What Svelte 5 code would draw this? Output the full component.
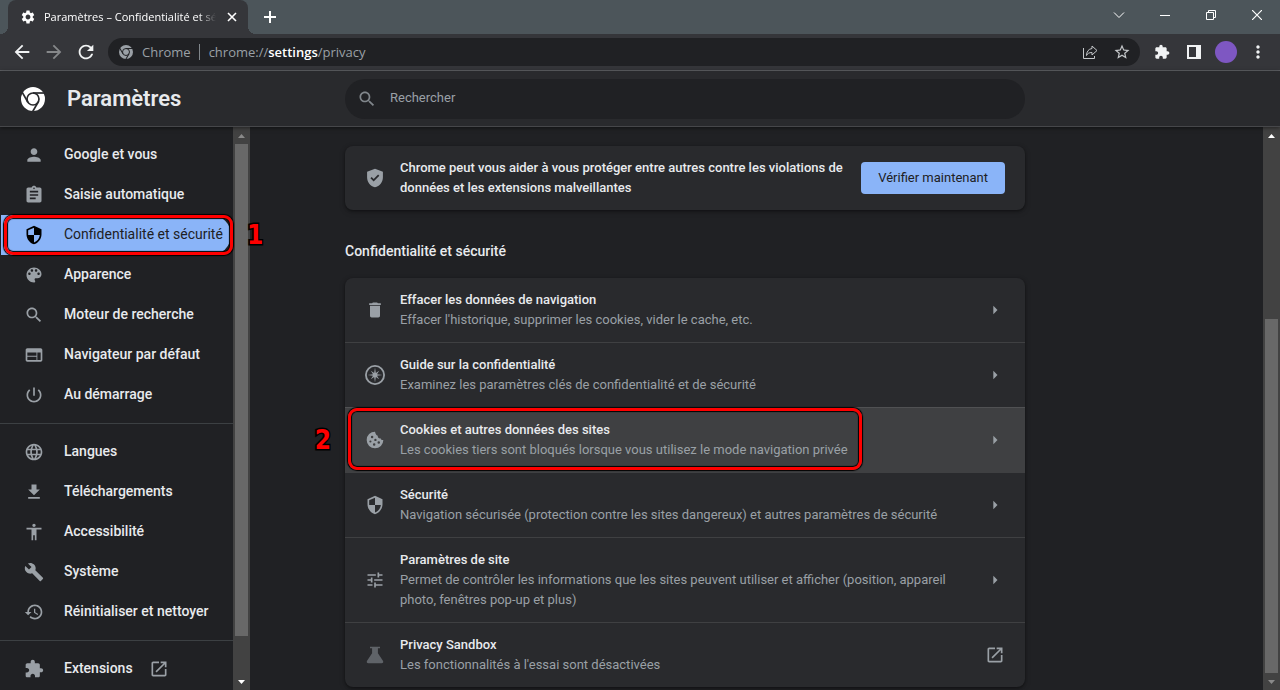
<script>
    const paths = {
        person: "M12 12c2.21 0 4-1.79 4-4s-1.79-4-4-4-4 1.79-4 4 1.79 4 4 4zm0 2c-2.67 0-8 1.34-8 4v2h16v-2c0-2.66-5.33-4-8-4z",
        assignment: "M19 3h-4.18C14.4 1.84 13.3 1 12 1c-1.3 0-2.4.84-2.82 2H5c-1.1 0-2 .9-2 2v14c0 1.1.9 2 2 2h14c1.1 0 2-.9 2-2V5c0-1.1-.9-2-2-2zm-7 0c.55 0 1 .45 1 1s-.45 1-1 1-1-.45-1-1 .45-1 1-1zm2 14H7v-2h7v2zm3-4H7v-2h10v2zm0-4H7V7h10v2z",
        security: "M12 1L3 5v6c0 5.55 3.84 10.74 9 12 5.16-1.26 9-6.45 9-12V5l-9-4zm0 10.99h7c-.53 4.12-3.28 7.79-7 8.94V12H5V6.3l7-3.11v8.8z",
        palette: "M12 3c-4.97 0-9 4.03-9 9s4.03 9 9 9c.83 0 1.5-.67 1.5-1.5 0-.39-.15-.74-.39-1.01-.23-.26-.38-.61-.38-.99 0-.83.67-1.5 1.5-1.5H16c2.76 0 5-2.24 5-5 0-4.42-4.03-8-9-8zm-5.5 9c-.83 0-1.5-.67-1.5-1.5S5.67 9 6.5 9 8 9.67 8 10.5 7.33 12 6.5 12zm3-4C8.67 8 8 7.33 8 6.5S8.67 5 9.5 5s1.5.67 1.5 1.5S10.33 8 9.5 8zm5 0c-.83 0-1.5-.67-1.5-1.5S13.67 5 14.5 5s1.5.67 1.5 1.5S15.33 8 14.5 8zm3 4c-.83 0-1.5-.67-1.5-1.5S16.67 9 17.5 9s1.5.67 1.5 1.5-.67 1.5-1.5 1.5z",
        search: "M15.5 14h-.79l-.28-.27C15.41 12.59 16 11.11 16 9.5 16 5.91 13.09 3 9.5 3S3 5.91 3 9.5 5.91 16 9.5 16c1.61 0 3.09-.59 4.23-1.57l.27.28v.79l5 4.99L20.49 19l-4.99-5zm-6 0C7.01 14 5 11.99 5 9.5S7.01 5 9.5 5 14 7.01 14 9.5 11.99 14 9.5 14z",
        web: "M20 4H4c-1.1 0-1.99.9-1.99 2L2 18c0 1.1.9 2 2 2h16c1.1 0 2-.9 2-2V6c0-1.1-.9-2-2-2zm-5 14H4v-4h11v4zm0-5H4V9h11v4zm5 5h-4V9h4v9z",
        power: "M13 3h-2v10h2V3zm4.83 2.17l-1.42 1.42C17.99 7.86 19 9.81 19 12c0 3.87-3.13 7-7 7s-7-3.13-7-7c0-2.19 1.01-4.14 2.58-5.42L6.17 5.17C4.23 6.82 3 9.26 3 12c0 4.97 4.03 9 9 9s9-4.03 9-9c0-2.74-1.23-5.18-3.17-6.83z",
        language: "M11.99 2C6.47 2 2 6.48 2 12s4.47 10 9.99 10C17.52 22 22 17.52 22 12S17.52 2 11.99 2zm6.93 6h-2.95c-.32-1.25-.78-2.45-1.38-3.56 1.84.63 3.37 1.91 4.33 3.56zM12 4.04c.83 1.2 1.48 2.53 1.91 3.96h-3.82c.43-1.43 1.08-2.76 1.91-3.96zM4.26 14C4.1 13.36 4 12.69 4 12s.1-1.36.26-2h3.38c-.08.66-.14 1.32-.14 2 0 .68.06 1.34.14 2H4.26zm.82 2h2.95c.32 1.25.78 2.45 1.38 3.56-1.84-.63-3.37-1.9-4.33-3.56zm2.95-8H5.08c.96-1.66 2.49-2.93 4.33-3.56C8.81 5.55 8.35 6.75 8.03 8zM12 19.96c-.83-1.2-1.48-2.53-1.91-3.96h3.82c-.43 1.43-1.08 2.76-1.91 3.96zM14.34 14H9.66c-.09-.66-.16-1.32-.16-2 0-.68.07-1.35.16-2h4.68c.09.65.16 1.32.16 2 0 .68-.07 1.34-.16 2zm.25 5.56c.6-1.11 1.06-2.31 1.38-3.56h2.95c-.96 1.65-2.49 2.93-4.33 3.56zM16.36 14c.08-.66.14-1.32.14-2 0-.68-.06-1.34-.14-2h3.38c.16.64.26 1.31.26 2s-.1 1.36-.26 2h-3.38z",
        download: "M19 9h-4V3H9v6H5l7 7 7-7zM5 18v2h14v-2H5z",
        accessibility: "M12 2c1.1 0 2 .9 2 2s-.9 2-2 2-2-.9-2-2 .9-2 2-2zm9 7h-6v13h-2v-6h-2v6H9V9H3V7h18v2z",
        build: "M22.7 19l-9.1-9.1c.9-2.3.4-5-1.5-6.9-2-2-5-2.4-7.4-1.3L9 6 6 9 1.6 4.7C.4 7.1.9 10.1 2.9 12.1c1.9 1.9 4.6 2.4 6.9 1.5l9.1 9.1c.4.4 1 .4 1.4 0l2.3-2.3c.5-.4.5-1.1.1-1.4z",
        restore: "M13 3c-4.97 0-9 4.03-9 9H1l3.89 3.89.07.14L9 12H6c0-3.87 3.13-7 7-7s7 3.13 7 7-3.13 7-7 7c-1.93 0-3.68-.79-4.94-2.06l-1.42 1.42C8.27 19.99 10.51 21 13 21c4.97 0 9-4.03 9-9s-4.03-9-9-9zm-1 5v5l4.28 2.54.72-1.21-3.5-2.08V8H12z",
        extension: "M20.5 11H19V7c0-1.1-.9-2-2-2h-4V3.5C13 2.12 11.88 1 10.5 1S8 2.12 8 3.5V5H4c-1.1 0-1.99.9-1.99 2v3.8H3.5c1.49 0 2.7 1.21 2.7 2.7s-1.21 2.7-2.7 2.7H2V20c0 1.1.9 2 2 2h3.8v-1.5c0-1.49 1.21-2.7 2.7-2.7 1.49 0 2.7 1.21 2.7 2.7V22H17c1.1 0 2-.9 2-2v-4h1.5c1.38 0 2.5-1.12 2.5-2.5S21.88 11 20.5 11z",
        external: "M19 19H5V5h7V3H5c-1.11 0-2 .9-2 2v14c0 1.1.89 2 2 2h14c1.1 0 2-.9 2-2v-7h-2v7zM14 3v2h3.59l-9.83 9.83 1.41 1.41L19 6.41V10h2V3h-7z",
        trash: "M6 19c0 1.1.9 2 2 2h8c1.1 0 2-.9 2-2V7H6v12zM19 4h-3.5l-1-1h-5l-1 1H5v2h14V4z",
        compass: "M12 0a12 12 0 1 0 0 24 12 12 0 0 0 0-24zm0 2.2a9.8 9.8 0 1 1 0 19.6 9.8 9.8 0 0 1 0-19.6zM12 3l1 6.6 4-2.6-2.6 4L21 12l-6.6 1 2.6 4-4-2.6L12 21l-1-6.6-4 2.6 2.6-4L3 12l6.6-1L7 7l4 2.6z",
        cookie: "M12 2A10 10 0 1 0 22 12c-1.6.5-3.1-.4-3.3-2-2 .4-3.7-1.2-3.4-3.2C13.6 6.4 12.6 4.7 12 2zM8.5 7a1.5 1.5 0 1 1 0 3 1.5 1.5 0 0 1 0-3zM6.5 12.5a1.3 1.3 0 1 1 0 2.6 1.3 1.3 0 0 1 0-2.6zM12.5 10.5a1.4 1.4 0 1 1 0 2.8 1.4 1.4 0 0 1 0-2.8zM11 16a1.5 1.5 0 1 1 0 3 1.5 1.5 0 0 1 0-3zM16.5 13.5a1.5 1.5 0 1 1 0 3 1.5 1.5 0 0 1 0-3z",
        tune: "M3 17v2h6v-2H3zM3 5v2h10V5H3zm10 16v-2h8v-2h-8v-2h-2v6h2zM7 9v2H3v2h4v2h2V9H7zm14 4v-2H11v2h10zm-6-4h2V7h4V5h-4V3h-2v6z",
        flask: "M6 2h12v2h-2.5v6l6 9c1 1.5.2 3-1.5 3H4c-1.7 0-2.5-1.5-1.5-3l6-9V4H6z",
        shieldCheck: "M12 1L2.5 4.5v6.5c0 5.8 3.9 10.7 9.5 12 5.6-1.3 9.5-6.2 9.5-12V4.5L12 1zm-1.6 15.2l-3.9-3.9 1.5-1.5 2.4 2.4 5.3-5.3 1.5 1.5-6.8 6.8z",
        gear: "M19.14 12.94c.04-.3.06-.61.06-.94 0-.32-.02-.64-.07-.94l2.03-1.58c.18-.14.23-.41.12-.61l-1.92-3.32c-.12-.22-.37-.29-.59-.22l-2.39.96c-.5-.38-1.03-.7-1.62-.94l-.36-2.54c-.04-.24-.24-.41-.48-.41h-3.84c-.24 0-.43.17-.47.41l-.36 2.54c-.59.24-1.13.57-1.62.94l-2.39-.96c-.22-.08-.47 0-.59.22L2.74 8.87c-.12.21-.08.47.12.61l2.03 1.58c-.05.3-.09.63-.09.94s.02.64.07.94l-2.03 1.58c-.18.14-.23.41-.12.61l1.92 3.32c.12.22.37.29.59.22l2.39-.96c.5.38 1.03.7 1.62.94l.36 2.54c.05.24.24.41.48.41h3.84c.24 0 .44-.17.47-.41l.36-2.54c.59-.24 1.13-.56 1.62-.94l2.39.96c.22.08.47 0 .59-.22l1.92-3.32c.12-.22.07-.47-.12-.61l-2.01-1.58zM12 15.6c-1.98 0-3.6-1.62-3.6-3.6s1.62-3.6 3.6-3.6 3.6 1.62 3.6 3.6-1.62 3.6-3.6 3.6z",
        back: "M20 11H7.83l5.59-5.59L12 4l-8 8 8 8 1.41-1.41L7.83 13H20v-2z",
        forward: "M12 4l-1.41 1.41L16.17 11H4v2h12.17l-5.58 5.59L12 20l8-8z",
        reload: "M17.65 6.35C16.2 4.9 14.21 4 12 4c-4.42 0-7.99 3.58-7.99 8s3.57 8 7.99 8c3.73 0 6.84-2.55 7.73-6h-2.08c-.82 2.33-3.04 4-5.65 4-3.31 0-6-2.69-6-6s2.69-6 6-6c1.66 0 3.14.69 4.22 1.78L13 11h7V4l-2.35 2.35z",
        star: "M22 9.24l-7.19-.62L12 2 9.19 8.63 2 9.24l5.46 4.73L5.82 21 12 17.27 18.18 21l-1.63-7.03L22 9.24zM12 15.4l-3.76 2.27 1-4.28-3.32-2.88 4.38-.38L12 6.1l1.71 4.04 4.38.38-3.32 2.88 1 4.28L12 15.4z",
        more: "M12 8c1.1 0 2-.9 2-2s-.9-2-2-2-2 .9-2 2 .9 2 2 2zm0 2c-1.1 0-2 .9-2 2s.9 2 2 2 2-.9 2-2-.9-2-2-2zm0 6c-1.1 0-2 .9-2 2s.9 2 2 2 2-.9 2-2-.9-2-2-2z",
        arrow: "M10 7l5 5-5 5z",
    };

    const menu = [
        [
            { icon: "person", label: "Google et vous", href: "#people" },
            { icon: "assignment", label: "Saisie automatique", href: "#autofill" },
            { icon: "security", label: "Confidentialité et sécurité", href: "#privacy", step: 1 },
            { icon: "palette", label: "Apparence", href: "#appearance" },
            { icon: "search", label: "Moteur de recherche", href: "#search" },
            { icon: "web", label: "Navigateur par défaut", href: "#defaultBrowser" },
            { icon: "power", label: "Au démarrage", href: "#onStartup" },
        ],
        [
            { icon: "language", label: "Langues", href: "#languages" },
            { icon: "download", label: "Téléchargements", href: "#downloads" },
            { icon: "accessibility", label: "Accessibilité", href: "#accessibility" },
            { icon: "build", label: "Système", href: "#system" },
            { icon: "restore", label: "Réinitialiser et nettoyer", href: "#reset" },
        ],
        [{ icon: "extension", label: "Extensions", href: "#extensions", external: true }],
    ];

    const rows = [
        { icon: "trash", title: "Effacer les données de navigation", text: "Effacer l'historique, supprimer les cookies, vider le cache, etc." },
        { icon: "compass", title: "Guide sur la confidentialité", text: "Examinez les paramètres clés de confidentialité et de sécurité" },
        { icon: "cookie", title: "Cookies et autres données des sites", text: "Les cookies tiers sont bloqués lorsque vous utilisez le mode navigation privée", step: 2 },
        { icon: "security", title: "Sécurité", text: "Navigation sécurisée (protection contre les sites dangereux) et autres paramètres de sécurité" },
        { icon: "tune", title: "Paramètres de site", text: "Permet de contrôler les informations que les sites peuvent utiliser et afficher (position, appareil photo, fenêtres pop-up et plus)" },
        { icon: "flask", title: "Privacy Sandbox", text: "Les fonctionnalités à l'essai sont désactivées", external: true, dim: true },
    ];

    let current = "#privacy";
    let query = "";
</script>

{#snippet icon(name, size = 20)}
    <svg class="icon" width={size} height={size} viewBox="0 0 24 24" aria-hidden="true">
        <path d={paths[name]} fill="currentColor" fill-rule="evenodd" />
    </svg>
{/snippet}

{#snippet chromeLogo(size, gap)}
    <svg class="icon" width={size} height={size} viewBox="0 0 24 24" aria-hidden="true">
        <circle cx="12" cy="12" r="12" fill="currentColor" />
        <g stroke={gap} stroke-width="1.7" fill="none">
            <circle cx="12" cy="12" r="6" />
            <path d="M12 6h12" />
            <path d="M12 6h12" transform="rotate(120 12 12)" />
            <path d="M12 6h12" transform="rotate(240 12 12)" />
        </g>
    </svg>
{/snippet}

{#snippet scrollbar(size, atEnd)}
    <div class="scrollbar" aria-hidden="true">
        <span class="cap" class:off={!atEnd}><svg width="7" height="4" viewBox="0 0 7 4"><path d="M0 4L3.5 0 7 4z" fill="currentColor" /></svg></span>
        <div class="track" class:end={atEnd}><div class="thumb" style="height: {size}%"></div></div>
        <span class="cap" class:off={atEnd}><svg width="7" height="4" viewBox="0 0 7 4"><path d="M0 0L3.5 4 7 0z" fill="currentColor" /></svg></span>
    </div>
{/snippet}

<div class="window">
    <div class="titlebar">
        <div class="tab">
            {@render icon("gear", 16)}
            <span class="tab-title">Paramètres – Confidentialité et sécurité</span>
            <button class="plain" aria-label="Fermer l'onglet">
                <svg width="16" height="16" viewBox="0 0 16 16"><path d="M4 4l8 8M12 4l-8 8" stroke="currentColor" stroke-width="1.6" /></svg>
            </button>
        </div>
        <button class="plain new-tab" aria-label="Nouvel onglet">
            <svg width="14" height="14" viewBox="0 0 14 14"><path d="M7 1v12M1 7h12" stroke="currentColor" stroke-width="2" /></svg>
        </button>
        <div class="controls">
            <button class="plain" aria-label="Rechercher dans les onglets"><svg width="12" height="12" viewBox="0 0 12 12"><path d="M1 3.5l5 5 5-5" stroke="currentColor" fill="none" /></svg></button>
            <button class="plain" aria-label="Réduire"><svg width="10" height="10" viewBox="0 0 10 10"><path d="M0 5.5h10" stroke="currentColor" /></svg></button>
            <button class="plain" aria-label="Restaurer"><svg width="10" height="10" viewBox="0 0 10 10"><path d="M.5 2.5h7v7h-7zM2.5 2.5v-2h7v7h-2" stroke="currentColor" fill="none" /></svg></button>
            <button class="plain" aria-label="Fermer"><svg width="10" height="10" viewBox="0 0 10 10"><path d="M0 0l10 10M10 0L0 10" stroke="currentColor" stroke-width="1.2" /></svg></button>
        </div>
    </div>

    <div class="toolbar">
        <button class="plain tool" aria-label="Retour">{@render icon("back", 22)}</button>
        <button class="plain tool disabled" aria-label="Avancer">{@render icon("forward", 22)}</button>
        <button class="plain tool" aria-label="Actualiser">{@render icon("reload", 22)}</button>
        <div class="omnibox">
            {@render chromeLogo(14, "#202124")}
            <span class="origin">Chrome</span>
            <span class="url">chrome://<b>settings</b>/privacy</span>
            <button class="plain tool" aria-label="Partager">
                <svg width="16" height="16" viewBox="0 0 16 16" fill="none" stroke="currentColor"><path d="M1.5 4v10.5h11V12" /><path d="M10 2l5 4.5-5 4.5V8.5c-3 0-4.500 1-5.500 3 .2-4 2-6.500 5.500-7z" stroke-linejoin="round" /></svg>
            </button>
            <button class="plain tool" aria-label="Ajouter aux favoris">{@render icon("star", 18)}</button>
        </div>
        <div class="actions">
            <button class="plain tool" aria-label="Extensions">{@render icon("extension", 16)}</button>
            <button class="plain tool" aria-label="Panneau latéral">
                <svg width="14" height="14" viewBox="0 0 14 14"><path d="M0 0h14v14H0zM2 2v10h7V2z" fill="currentColor" fill-rule="evenodd" /></svg>
            </button>
            <button class="plain tool" aria-label="Profil"><span class="avatar"></span></button>
            <button class="plain tool" aria-label="Menu">{@render icon("more", 20)}</button>
        </div>
    </div>

    <header>
        <div class="brand">
            {@render chromeLogo(24, "#292a2d")}
            <h1>Paramètres</h1>
        </div>
        <label class="search">
            {@render icon("search")}
            <input type="text" placeholder="Rechercher" aria-label="Rechercher" bind:value={query} />
        </label>
    </header>

    <div class="content">
        <aside>
            <nav>
                {#each menu as group}
                    <div class="group">
                        {#each group as item}
                            <a href={item.href} class:selected={item.href === current} on:click={() => current = item.href}>
                                {@render icon(item.icon)}
                                <span class="label">{item.label}</span>
                                {#if item.external}{@render icon("external")}{/if}
                                {#if item.step}
                                    <span class="mark"></span>
                                    <span class="step after">{item.step}</span>
                                {/if}
                            </a>
                        {/each}
                    </div>
                {/each}
            </nav>
            {@render scrollbar(93, false)}
        </aside>

        <main>
            <section class="card check">
                {@render icon("shieldCheck")}
                <p>Chrome peut vous aider à vous protéger entre autres contre les violations de données et les extensions malveillantes</p>
                <button class="primary">Vérifier maintenant</button>
            </section>

            <h2>Confidentialité et sécurité</h2>
            <section class="card">
                {#each rows as row}
                    <button class="row" class:hover={row.step}>
                        <span class="lead" class:dim={row.dim}>{@render icon(row.icon)}</span>
                        <span class="text">
                            <span class="title">{row.title}</span>
                            <span class="sub">{row.text}</span>
                        </span>
                        {@render icon(row.external ? "external" : "arrow")}
                        {#if row.step}
                            <span class="mark"></span>
                            <span class="step before">{row.step}</span>
                        {/if}
                    </button>
                {/each}
            </section>
        </main>
        {@render scrollbar(67, true)}
    </div>
</div>

<style>
    :global(body) {
        margin: 0;
        background: #202124;
    }

    .window {
        display: flex;
        flex-direction: column;
        height: 100vh;
        overflow: hidden;
        background: #202124;
        color: #e8eaed;
        font-family: Roboto, "Liberation Sans", sans-serif;
        font-size: 13px;
        line-height: 20px;
    }

    .icon {
        flex: none;
        display: block;
    }

    .plain {
        display: flex;
        align-items: center;
        justify-content: center;
        padding: 0;
        border: 0;
        background: none;
        color: inherit;
    }

    .titlebar {
        display: flex;
        height: 34px;
        padding-left: 8px;
        background: #4c555a;
        color: #fff;
        font-family: "Open Sans", "Noto Sans", sans-serif;
    }
    .tab {
        position: relative;
        display: flex;
        align-items: center;
        gap: 8px;
        box-sizing: border-box;
        width: 240px;
        padding: 0 8px 0 12px;
        border-radius: 8px 8px 0 0;
        background: #35363a;
    }
    .tab::before,
    .tab::after {
        content: "";
        position: absolute;
        bottom: 0;
        width: 8px;
        height: 8px;
    }
    .tab::before {
        right: 100%;
        background: radial-gradient(circle at 0 0, transparent 8px, #35363a 8px);
    }
    .tab::after {
        left: 100%;
        background: radial-gradient(circle at 100% 0, transparent 8px, #35363a 8px);
    }
    .tab-title {
        flex: 1;
        overflow: hidden;
        white-space: nowrap;
        font-size: 11px;
        font-weight: 500;
        mask-image: linear-gradient(to right, #000 90%, transparent);
    }
    .new-tab {
        width: 44px;
    }
    .controls {
        display: flex;
        height: 29px;
        margin-left: auto;
    }
    .controls button {
        width: 46px;
    }

    .toolbar {
        display: flex;
        align-items: center;
        height: 36px;
        padding: 0 6px;
        border-bottom: 1px solid #5f6165;
        background: #35363a;
        font-family: "Open Sans", "Noto Sans", sans-serif;
    }
    .tool {
        flex: none;
        width: 32px;
        height: 28px;
        color: #f1f3f4;
    }
    .disabled {
        color: #86888a;
    }
    .omnibox {
        flex: 1;
        display: flex;
        align-items: center;
        height: 28px;
        margin-left: 6px;
        padding: 0 2px 0 11px;
        border-radius: 14px;
        background: #202124;
        color: #9aa0a6;
        font-size: 13px;
    }
    .omnibox .tool {
        color: #c4c7ca;
    }
    .origin {
        margin-left: 9px;
        padding-right: 8px;
        border-right: 1px solid #80868b;
        line-height: 16px;
    }
    .url {
        flex: 1;
        padding-left: 9px;
    }
    .url b {
        color: #fff;
        font-weight: 600;
    }
    .actions {
        display: flex;
        margin-left: 6px;
    }
    .avatar {
        width: 22px;
        height: 22px;
        border-radius: 50%;
        background: #7e57c2;
    }

    header {
        position: relative;
        z-index: 1;
        display: flex;
        align-items: center;
        height: 55px;
        border-bottom: 1px solid #46474a;
        background: #292a2d;
        box-shadow: 0 1px 4px rgba(0, 0, 0, 0.5);
    }
    .brand {
        flex: none;
        display: flex;
        align-items: center;
        gap: 22px;
        box-sizing: border-box;
        width: 345px;
        padding-left: 21px;
        color: #fff;
    }
    h1 {
        margin: 0;
        color: #e8eaed;
        font-size: 22px;
        font-weight: 600;
        line-height: 24px;
    }
    .search {
        flex: 0 1 680px;
        display: flex;
        align-items: center;
        gap: 13px;
        box-sizing: border-box;
        height: 40px;
        padding: 0 12px;
        border-radius: 20px;
        background: #202124;
        color: #80868b;
    }
    .search input {
        flex: 1;
        padding: 0 0 2px;
        border: 0;
        outline: none;
        background: none;
        color: #e8eaed;
        font: inherit;
    }
    .search input::placeholder {
        color: #9aa0a6;
        opacity: 1;
    }

    .content {
        flex: 1;
        display: flex;
        min-height: 0;
    }
    aside {
        flex: none;
        display: flex;
        width: 250px;
    }
    nav {
        flex: 1;
        min-width: 0;
        padding-top: 8px;
    }
    .group + .group {
        margin-top: 8px;
        padding-top: 8px;
        border-top: 1px solid #3c4043;
    }
    nav a {
        position: relative;
        display: flex;
        align-items: center;
        gap: 20px;
        height: 40px;
        margin: 0 2px 0 1px;
        padding-left: 23px;
        border-radius: 0 20px 20px 0;
        color: #e8eaed;
        font-size: 14px;
        font-weight: 500;
        text-decoration: none;
        white-space: nowrap;
    }
    nav a .icon {
        color: #9aa0a6;
    }
    nav a .icon:not(:first-child) {
        margin-left: -4px;
    }
    nav a.selected {
        background: #8ab4f8;
        color: #202124;
        font-weight: 400;
    }
    nav a.selected .icon {
        color: #000;
    }
    .label {
        padding-bottom: 2px;
    }

    .scrollbar {
        flex: none;
        display: flex;
        flex-direction: column;
        width: 17px;
        background: #424242;
    }
    .cap {
        display: flex;
        align-items: center;
        justify-content: center;
        height: 17px;
        color: #fff;
    }
    .cap.off {
        color: #8a8a8a;
    }
    .track {
        flex: 1;
        display: flex;
        flex-direction: column;
        padding: 0 2px;
    }
    .track.end {
        justify-content: flex-end;
    }
    .thumb {
        background: #686868;
    }

    main {
        flex: 1;
        min-width: 0;
        padding: 19px 95px 0;
    }
    .card {
        max-width: 680px;
        border-radius: 8px;
        background: #292a2d;
        box-shadow: 0 1px 3px rgba(0, 0, 0, 0.4), 0 2px 6px rgba(0, 0, 0, 0.2);
    }
    .check {
        display: flex;
        align-items: center;
        gap: 15px;
        box-sizing: border-box;
        padding: 12px 20px;
        color: #9aa0a6;
    }
    .check p {
        flex: 1;
        margin: 0;
        color: #e8eaed;
        font-weight: 500;
    }
    .primary {
        height: 32px;
        padding: 0 17px;
        border: 0;
        border-radius: 4px;
        background: #8ab4f8;
        color: #202124;
        font: inherit;
    }
    h2 {
        margin: 0;
        padding: 31px 0 17px;
        font-size: 14px;
        font-weight: 500;
        line-height: 20px;
    }
    .row {
        position: relative;
        display: flex;
        align-items: center;
        box-sizing: border-box;
        width: 100%;
        padding: 12px 20px;
        border: 0;
        background: none;
        color: #9aa0a6;
        font: inherit;
        text-align: left;
    }
    .row + .row {
        border-top: 1px solid #3f4042;
    }
    .row.hover {
        background: #3f4042;
        border-top-color: #505153;
    }
    .lead {
        width: 35px;
    }
    .lead.dim {
        color: #5f6368;
    }
    .text {
        flex: 1;
        display: flex;
        flex-direction: column;
        padding-right: 24px;
    }
    .title {
        color: #e8eaed;
        font-weight: 500;
    }

    /* numbered callouts laid over the page */
    .mark {
        position: absolute;
        inset: 0 -2px 0 3px;
        border: 3px solid #f00;
        border-radius: 9px;
        box-shadow: 0 0 1px 1px #000, inset 0 0 1px 1px #000;
    }
    .row .mark {
        inset: 0 163px 2px 3px;
    }
    .step {
        position: absolute;
        top: 50%;
        color: #f00;
        font-family: "DejaVu Sans Condensed", "DejaVu Sans", sans-serif;
        font-size: 26px;
        font-weight: 700;
        line-height: 30px;
        transform: translateY(-50%);
        -webkit-text-stroke: 3px #000;
        paint-order: stroke fill;
    }
    .step.after {
        left: 100%;
        margin-left: 16px;
    }
    .step.before {
        right: 100%;
        margin-right: 14px;
    }
</style>
